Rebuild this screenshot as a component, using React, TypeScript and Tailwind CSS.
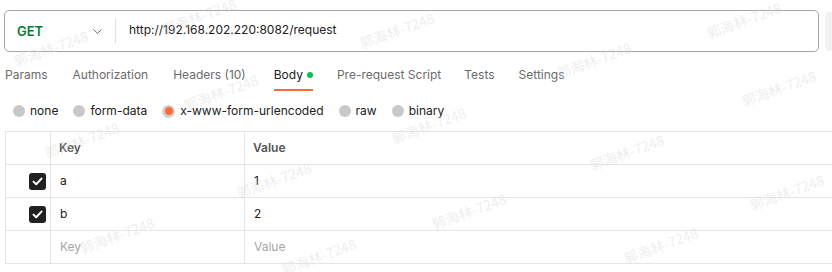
import React from "react";

const marks: [number, number][] = [
  [52, 48], [200, 16], [398, 30], [595, 60], [745, 20], [780, 88], [222, 92],
  [83, 140], [628, 152], [430, 125], [275, 180], [470, 211], [118, 235],
  [662, 245], [788, 192], [320, 256],
];

function Radio({ label, selected }: { label: string; selected?: boolean }) {
  return (
    <div className="flex items-center gap-[5px]">
      {selected ? (
        <span className="flex h-[13px] w-[13px] items-center justify-center rounded-full bg-[#cfcfcf]">
          <span className="h-[8px] w-[8px] rounded-full bg-[#ff6c37]" />
        </span>
      ) : (
        <span className="h-[12px] w-[12px] rounded-full bg-[#c8c8c8]" />
      )}
      <span className="text-[12px] text-[#212121]">{label}</span>
    </div>
  );
}

function Check() {
  return (
    <span className="flex h-[17px] w-[17px] items-center justify-center rounded-[3px] bg-[#212121]">
      <svg width="11" height="9" viewBox="0 0 11 9" fill="none">
        <path d="M1.5 4.6 4.2 7.2 9.5 1.6" stroke="#fff" strokeWidth="2" strokeLinecap="round" strokeLinejoin="round" />
      </svg>
    </span>
  );
}

export default function App() {
  const tabs = ["Params", "Authorization", "Headers (10)"];
  const tabs2 = ["Pre-request Script", "Tests", "Settings"];
  return (
    <div
      className="relative h-[272px] w-[832px] overflow-hidden bg-white"
      style={{ fontFamily: "Inter, 'Noto Sans', sans-serif" }}
    >
      {/* URL bar */}
      <div className="flex items-center pl-[4px] pt-[10px]">
        <div className="flex h-[42px] w-[815px] shrink-0 items-center rounded-[5px] border border-[#a6a6a6]">
          <div className="flex w-[110px] items-center justify-between pl-[12px] pr-[13px]">
            <span className="pt-[2px] text-[13px] font-semibold text-[#007f31]">GET</span>
            <svg width="9" height="5" viewBox="0 0 9 5" fill="none">
              <path d="M0.5 0.5 4.5 4.3 8.5 0.5" stroke="#6b6b6b" strokeWidth="1" />
            </svg>
          </div>
          <div className="h-[24px] w-px bg-[#e0e0e0]" />
          <span className="pl-[13px] pb-[2px] text-[12px] text-[#212121]">http://192.168.202.220:8082/request</span>
        </div>
        <div className="ml-[6px] h-[39px] w-[20px] shrink-0 rounded-[4px] bg-[#f2f2f2]" />
      </div>

      {/* Tabs */}
      <div className="mt-[11px] flex h-[28px] items-start pl-[5px] text-[12px] text-[#6b6b6b]">
        {tabs.map((t) => (
          <span key={t} className="mr-[25px] leading-[24px]">{t}</span>
        ))}
        <div className="mr-[24px] ml-[3px] flex flex-col">
          <div className="flex items-center gap-[4px] leading-[24px] text-[#212121]">
            Body
            <span className="h-[6px] w-[6px] rounded-full bg-[#0cbb52]" />
          </div>
          <div className="mt-[2px] h-[2px] bg-[#ff6c37]" />
        </div>
        <span className="mr-[23px] leading-[24px]">{tabs2[0]}</span>
        <span className="mr-[24px] leading-[24px]">{tabs2[1]}</span>
        <span className="leading-[24px]">{tabs2[2]}</span>
      </div>

      {/* Radios */}
      <div className="mt-[10px] flex h-[20px] items-center gap-[15px] pl-[13px]">
        <Radio label="none" />
        <Radio label="form-data" />
        <Radio label="x-www-form-urlencoded" selected />
        <Radio label="raw" />
        <Radio label="binary" />
      </div>

      {/* Table */}
      <div className="ml-[5px] mt-[10px] w-[840px] border-t border-l border-[#e6e6e6] text-[12px]">
        <div className="flex h-[33px] border-b border-[#e6e6e6]">
          <div className="w-[45px] border-r border-[#e6e6e6]" />
          <div className="flex w-[194px] items-center border-r border-[#e6e6e6] pl-[8px] font-semibold text-[#555]">Key</div>
          <div className="flex flex-1 items-center pl-[8px] font-semibold text-[#555]">Value</div>
        </div>
        {[["a", "1"], ["b", "2"]].map(([k, v]) => (
          <div key={k} className="flex h-[33px] border-b border-[#e6e6e6]">
            <div className="flex w-[45px] items-center justify-end border-r border-[#e6e6e6] pr-[4px]">
              <Check />
            </div>
            <div className="flex w-[194px] items-center border-r border-[#e6e6e6] pl-[9px] text-[#212121]">{k}</div>
            <div className="flex flex-1 items-center pl-[9px] text-[#212121]">{v}</div>
          </div>
        ))}
        <div className="flex h-[33px] border-b border-[#e6e6e6]">
          <div className="w-[45px] border-r border-[#e6e6e6]" />
          <div className="flex w-[194px] items-center border-r border-[#e6e6e6] pl-[9px] pb-[1px] text-[#a6a6a6]">Key</div>
          <div className="flex flex-1 items-center pl-[9px] pb-[1px] text-[#a6a6a6]">Value</div>
        </div>
      </div>

      {/* Watermarks */}
      {marks.map(([x, y], i) => (
        <span
          key={i}
          className="pointer-events-none absolute whitespace-nowrap text-[14px] text-[#d8d8d8] opacity-40"
          style={{
            left: x - 40,
            top: y - 10,
            transform: "rotate(-20deg)",
            fontFamily: "'Noto Sans CJK SC', sans-serif",
          }}
        >
          郭海林-7248
        </span>
      ))}
    </div>
  );
}
